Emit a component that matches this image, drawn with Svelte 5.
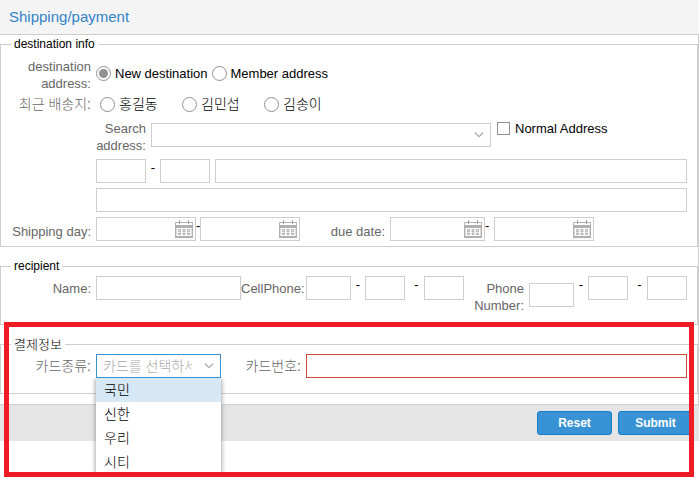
<script>
  const recent = ['홍길동', '김민섭', '김송이'];
  const cards = ['국민', '신한', '우리', '시티'];
  let destination = $state('new');
  let recentPick = $state('');
  let active = $state(0);
</script>

{#snippet dateField(id, label, narrow)}
  <span class="date" class:narrow>
    <input {id} type="text" aria-label={label} />
    <button type="button" aria-label="Open calendar">
      <svg width="18" height="18" viewBox="0 0 18 18" fill="none" stroke="#b0b0b0">
        <path d="M0.5 2.5H17.5V17H0.5Z" />
        <path d="M1.5 8V16M16.5 8V16" stroke="#dcdcdc" />
        <path d="M0 6.500H18" stroke-width="3" />
        <path d="M0 17H18" stroke-width="2" />
        <path d="M4.5 0V4M13.5 0V4" stroke="#a0a0a0" />
        <path d="M3.5 9.500h2v2h-2zM8 9.500h2v2H8zM12.500 9.500h2v2h-2zM3.500 13h2v1.500h-2zM8 13h2v1.500H8zM12.500 13h2v1.500h-2z" />
      </svg>
    </button>
  </span>
{/snippet}

{#snippet chevron()}
  <svg class="chevron" width="10" height="6" viewBox="0 0 10 6" fill="none" stroke="#aaa" stroke-width="1.3">
    <path d="M1 0.700L5 4.700L9 0.700" />
  </svg>
{/snippet}

<form class="panel" onsubmit={(e) => e.preventDefault()}>
  <h1>Shipping/payment</h1>

  <div class="body">
    <fieldset>
      <legend>destination info</legend>
      <div class="row" role="radiogroup" aria-labelledby="dest-label">
        <span class="label" id="dest-label">destination address:</span>
        <label class="option"><input type="radio" value="new" bind:group={destination} />New destination</label>
        <label class="option"><input type="radio" value="member" bind:group={destination} />Member address</label>
      </div>
      <div class="row ko" role="radiogroup" aria-labelledby="recent-label">
        <span class="label plain" id="recent-label">최근 배송지:</span>
        <div class="recent">
          {#each recent as name}
            <label class="option"><input type="radio" value={name} bind:group={recentPick} />{name}</label>
          {/each}
        </div>
      </div>
      <div class="row indent">
        <label class="label short" for="search">Search address:</label>
        <span class="combo search">
          <select id="search"><option></option></select>
          {@render chevron()}
        </span>
        <label class="option check"><input type="checkbox" />Normal Address</label>
      </div>
      <div class="row indent spaced">
        <input class="zip" type="text" aria-label="Zip code first part" />
        <span class="dash">-</span>
        <input class="zip" type="text" aria-label="Zip code second part" />
        <input class="grow after" type="text" aria-label="Address" />
      </div>
      <div class="row indent spaced">
        <input class="grow" type="text" aria-label="Address detail" />
      </div>
      <div class="row spaced">
        <label class="label" for="ship-from">Shipping day:</label>
        {@render dateField('ship-from', 'Shipping day', false)}
        <span class="dash tight">-</span>
        {@render dateField('ship-to', 'Shipping day end', false)}
        <label class="label" for="due-from">due date:</label>
        {@render dateField('due-from', 'due date', true)}
        <span class="dash near">-</span>
        {@render dateField('due-to', 'due date end', false)}
      </div>
    </fieldset>

    <fieldset class="recipient">
      <legend>recipient</legend>
      <div class="row top">
        <label class="label" for="name">Name:</label>
        <input id="name" class="grow" type="text" />
        <label class="label cell" for="cell">CellPhone:</label>
        <input id="cell" class="area" type="text" />
        <span class="dash">-</span>
        <input class="part" type="text" aria-label="CellPhone middle part" />
        <span class="dash wide">-</span>
        <input class="part" type="text" aria-label="CellPhone last part" />
        <label class="label phone" for="phone">Phone Number:</label>
        <input id="phone" class="area middle" type="text" />
        <span class="dash">-</span>
        <input class="part" type="text" aria-label="Phone middle part" />
        <span class="dash wide">-</span>
        <input class="part" type="text" aria-label="Phone last part" />
      </div>
    </fieldset>
  </div>

  <div class="highlight">
    <div class="body last">
      <fieldset class="payment">
        <legend class="ko-legend">결제정보</legend>
        <div class="row ko">
          <label class="label plain" for="card">카드종류:</label>
          <span class="combo card">
            <select id="card"><option>카드를 선택하세요</option></select>
            {@render chevron()}
            <ul role="listbox" aria-label="카드종류">
              {#each cards as card, i}
                <li role="option" aria-selected={i === active} class:active={i === active} onmouseenter={() => (active = i)}>{card}</li>
              {/each}
            </ul>
          </span>
          <label class="label plain" for="card-no">카드번호:</label>
          <input id="card-no" class="grow invalid" type="text" />
        </div>
      </fieldset>
    </div>
    <footer>
      <button type="reset">Reset</button>
      <button type="submit">Submit</button>
    </footer>
  </div>
</form>

<style>
  :global(body) {
    margin: 0;
    background: #fff;
  }
  .panel, .panel input, .panel select, .panel button {
    font-family: "Liberation Sans", "Noto Sans CJK KR", sans-serif;
    font-size: 13px;
    box-sizing: border-box;
  }
  .panel {
    margin-right: 1px;
    padding-bottom: 36px;
    line-height: 17px;
    color: #000;
  }
  h1 {
    margin: 0;
    padding: 0 9px;
    background: #f4f4f4;
    border-bottom: 1px solid #cecece;
    color: #3183c8;
    font-size: 15px;
    font-weight: 400;
    line-height: 34px;
  }
  .body {
    border-right: 1px solid #cecece;
    padding-top: 1px;
  }
  .body.last {
    padding-top: 11px;
    padding-bottom: 10px;
    border-bottom: 1px solid #cecece;
  }
  fieldset {
    margin: 0;
    min-width: 0;
    border: 1px solid #cecece;
    padding: 1px 10px 5px 5px;
  }
  .recipient {
    margin-top: 11px;
    padding-bottom: 10px;
  }
  .payment {
    padding-bottom: 15px;
  }
  legend {
    margin-left: 5px;
    padding: 0 3px;
    font-size: 12px;
    line-height: 17px;
    height: 17px;
  }
  .ko-legend {
    font-size: 13px;
    font-weight: 300;
  }
  .row {
    display: flex;
    align-items: center;
    min-height: 24px;
  }
  .row.top {
    align-items: flex-start;
  }
  .row.spaced {
    margin-top: 5px;
  }
  .indent {
    padding-left: 90px;
  }
  .label {
    flex: none;
    box-sizing: border-box;
    width: 90px;
    padding: 4px 5px 0 0;
    color: #666;
    text-align: right;
  }
  .label.plain {
    padding-top: 0;
  }
  .row.ko, .row.ko select {
    font-size: 14px;
    font-weight: 300;
  }
  .label.short {
    width: 55px;
  }
  .label.cell {
    width: 65px;
    padding-right: 0;
    text-align: left;
  }
  .label.phone {
    width: 65px;
  }
  .card + .label {
    width: 85px;
  }
  .option {
    display: flex;
    align-items: center;
    gap: 4px;
    margin-right: 4px;
    white-space: nowrap;
  }
  .recent {
    display: flex;
    padding-left: 4px;
  }
  .recent .option {
    width: 82px;
    margin: 0;
  }
  .check {
    align-self: flex-start;
    margin: 4px 0 0 6px;
    gap: 5px;
  }
  input {
    min-width: 0;
    height: 24px;
    margin: 0;
    border: 1px solid #cecece;
    border-radius: 0;
    padding: 0 6px;
    background: #fff;
    outline: none;
  }
  input[type="radio"], input[type="checkbox"] {
    appearance: none;
    flex: none;
    width: 15px;
    height: 15px;
    padding: 0;
    border-color: #919191;
  }
  input[type="radio"] {
    border-radius: 50%;
  }
  input[type="radio"]:checked {
    background: #919191;
    background-clip: content-box;
    padding: 2px;
  }
  input[type="checkbox"] {
    width: 13px;
    height: 13px;
  }
  .grow {
    flex: 1;
  }
  .after {
    margin-left: 5px;
  }
  .zip {
    width: 50px;
  }
  .area {
    width: 45px;
  }
  .part {
    width: 40px;
  }
  .middle {
    align-self: center;
  }
  .invalid {
    border-color: #cf4c35;
  }
  .dash {
    flex: none;
    align-self: flex-start;
    box-sizing: border-box;
    width: 14px;
    text-align: center;
  }
  .dash.wide {
    width: 19px;
    padding-left: 4px;
  }
  .dash.tight {
    width: 4px;
    text-align: left;
  }
  .dash.near {
    width: 9px;
    text-align: left;
  }
  .date {
    display: flex;
    flex: none;
    box-sizing: border-box;
    width: 100px;
    height: 24px;
    border: 1px solid #cecece;
  }
  .date.narrow {
    width: 95px;
  }
  .date input {
    flex: 1;
    height: 22px;
    border: 0;
  }
  .date button {
    flex: none;
    width: 20px;
    height: 22px;
    border: 0;
    padding: 0 2px 0 0;
    background: none;
  }
  .date svg {
    display: block;
  }
  .combo {
    position: relative;
    display: flex;
    height: 24px;
  }
  .search {
    flex: 1;
    max-width: 340px;
  }
  .card {
    flex: none;
    width: 125px;
  }
  select {
    appearance: none;
    width: 100%;
    height: 24px;
    border: 1px solid #cecece;
    border-radius: 0;
    padding: 0 28px 0 6px;
    background: #fff;
    color: #aaa;
    outline: none;
  }
  .card select {
    border-color: #3892d4;
  }
  .chevron {
    position: absolute;
    right: 7px;
    top: 9px;
    pointer-events: none;
  }
  ul {
    position: absolute;
    top: 24px;
    left: 0;
    right: 0;
    margin: 0;
    padding: 0;
    list-style: none;
    background: #fff;
    box-shadow: 0 0 5px #888;
    clip-path: inset(0 -6px);
  }
  li {
    padding: 0 8px;
    line-height: 24px;
  }
  li.active {
    background: #d6e8f6;
  }
  .highlight {
    position: relative;
  }
  .highlight::after {
    content: "";
    position: absolute;
    top: -3px;
    left: 4px;
    right: 5px;
    bottom: -36px;
    border: 5px solid #ee1c25;
    pointer-events: none;
  }
  footer {
    display: flex;
    justify-content: flex-end;
    gap: 6px;
    padding: 6px 6px 6px 0;
    background: #e5e5e5;
  }
  .panel footer button {
    width: 75px;
    height: 24px;
    border: 1px solid #157fcc;
    border-radius: 3px;
    padding: 0;
    background: #3892d4;
    color: #fff;
    font-size: 12px;
    font-weight: 700;
  }
</style>
